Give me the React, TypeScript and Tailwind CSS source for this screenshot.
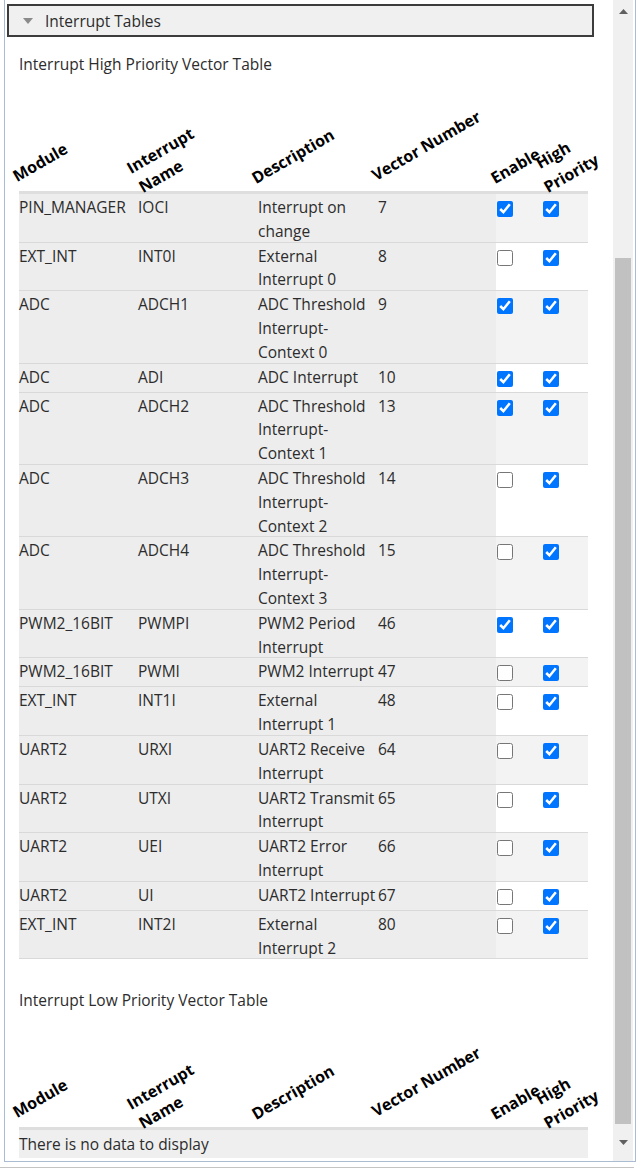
import React from "react";

type Row = {
  module: string;
  name: string;
  desc: string[];
  vector: number;
  enable: boolean;
  high: boolean;
};

const rows: Row[] = [
  { module: "PIN_MANAGER", name: "IOCI", desc: ["Interrupt on", "change"], vector: 7, enable: true, high: true },
  { module: "EXT_INT", name: "INT0I", desc: ["External", "Interrupt 0"], vector: 8, enable: false, high: true },
  { module: "ADC", name: "ADCH1", desc: ["ADC Threshold", "Interrupt-", "Context 0"], vector: 9, enable: true, high: true },
  { module: "ADC", name: "ADI", desc: ["ADC Interrupt"], vector: 10, enable: true, high: true },
  { module: "ADC", name: "ADCH2", desc: ["ADC Threshold", "Interrupt-", "Context 1"], vector: 13, enable: true, high: true },
  { module: "ADC", name: "ADCH3", desc: ["ADC Threshold", "Interrupt-", "Context 2"], vector: 14, enable: false, high: true },
  { module: "ADC", name: "ADCH4", desc: ["ADC Threshold", "Interrupt-", "Context 3"], vector: 15, enable: false, high: true },
  { module: "PWM2_16BIT", name: "PWMPI", desc: ["PWM2 Period", "Interrupt"], vector: 46, enable: true, high: true },
  { module: "PWM2_16BIT", name: "PWMI", desc: ["PWM2 Interrupt"], vector: 47, enable: false, high: true },
  { module: "EXT_INT", name: "INT1I", desc: ["External", "Interrupt 1"], vector: 48, enable: false, high: true },
  { module: "UART2", name: "URXI", desc: ["UART2 Receive", "Interrupt"], vector: 64, enable: false, high: true },
  { module: "UART2", name: "UTXI", desc: ["UART2 Transmit", "Interrupt"], vector: 65, enable: false, high: true },
  { module: "UART2", name: "UEI", desc: ["UART2 Error", "Interrupt"], vector: 66, enable: false, high: true },
  { module: "UART2", name: "UI", desc: ["UART2 Interrupt"], vector: 67, enable: false, high: true },
  { module: "EXT_INT", name: "INT2I", desc: ["External", "Interrupt 2"], vector: 80, enable: false, high: true },
];

const cols = "grid grid-cols-[119px_119px_120px_119px_46px_46px]";

const Label = ({ className, children }: { className: string; children: React.ReactNode }) => (
  <span
    className={
      "absolute origin-bottom-left -rotate-30 whitespace-nowrap text-[16px] leading-[16px] font-bold text-black " +
      className
    }
  >
    {children}
  </span>
);

const TableHeader = () => (
  <div className="relative z-10 h-[118px] border-b-[3px] border-[#dedede]">
    <Label className="left-[-1px] bottom-[7px]">Module</Label>
    <Label className="left-[113px] bottom-[15px]">Interrupt</Label>
    <Label className="left-[125px] bottom-[-4px]">Name</Label>
    <Label className="left-[238px] bottom-[5px]">Description</Label>
    <Label className="left-[358px] bottom-[8px]">Vector Number</Label>
    <Label className="left-[477px] bottom-[5px]">Enable</Label>
    <Label className="left-[522px] bottom-[20px]">High</Label>
    <Label className="left-[530px] bottom-[-4px]">Priority</Label>
  </div>
);

// text cell: Segoe-style text sits a little low in its line box
const Cell = ({ children, nowrap }: { children: React.ReactNode; nowrap?: boolean }) => (
  <div className="bg-[#ededed]">
    <div className={"translate-y-[2px]" + (nowrap ? " whitespace-nowrap" : "")}>{children}</div>
  </div>
);

const Check = ({ on }: { on: boolean }) => (
  <div className="pl-[1px] pt-[7px] min-h-[28px]">
    <input type="checkbox" defaultChecked={on} className="block m-0 w-4 h-4" />
  </div>
);

const Triangle = ({ up }: { up?: boolean }) => (
  <svg width="9" height="5" viewBox="0 0 9 5">
    <polygon points={up ? "0,5 9,5 4.5,0" : "0,0 9,0 4.5,5"} fill="#606060" />
  </svg>
);

export default function App() {
  return (
    <div className="w-[639px] h-[1170px] overflow-hidden bg-white font-['Open_Sans',sans-serif] text-[15.5px] text-[#2c2c2c]">
      <div className="ml-[4px] w-[632px] h-[1162px] flex border-l border-r border-b border-[#a9bcd2]">
        <div className="w-[608px] pl-[2px]">
          <div className="mt-[4px] w-[587px] h-[33px] flex items-center gap-[12px] pl-[14px] border-2 border-[#3c3c3c] bg-[#f0f0f0]">
            <svg width="10" height="6" viewBox="0 0 10 6">
              <polygon points="0,0 10,0 5,6" fill="#8a8a8a" />
            </svg>
            <span className="leading-6">Interrupt Tables</span>
          </div>

          <div className="pl-[12px]">
            <div className="mt-[15px] leading-6">Interrupt High Priority Vector Table</div>
            <div className="w-[569px]">
              <TableHeader />
              {rows.map((r, i) => (
                <div key={i} className={cols + " border-b border-[#d9d9d9] leading-[23.8px]"}>
                  <Cell nowrap>{r.module}</Cell>
                  <Cell>{r.name}</Cell>
                  <Cell nowrap>
                    {r.desc.map((d) => (
                      <div key={d} className="pl-[1px]">{d}</div>
                    ))}
                  </Cell>
                  <Cell>
                    <span className="pl-[1px]">{r.vector}</span>
                  </Cell>
                  <div className={i % 2 === 0 ? "bg-[#f3f3f3]" : "bg-white"}>
                    <Check on={r.enable} />
                  </div>
                  <div className={i % 2 === 0 ? "bg-[#f3f3f3]" : "bg-white"}>
                    <Check on={r.high} />
                  </div>
                </div>
              ))}
            </div>

            <div className="mt-[29px] leading-6">Interrupt Low Priority Vector Table</div>
            <div className="w-[569px]">
              <TableHeader />
              <div className="bg-[#efefef] h-[28px] leading-[28px]">There is no data to display</div>
            </div>
          </div>
        </div>

        <div className="w-[20px] bg-[#f0f0f0] flex flex-col items-center">
          <div className="h-[22px] flex items-center justify-center">
            <Triangle up />
          </div>
          <div className="mt-[236px] w-[16px] h-[866px] bg-[#c1c1c1]" />
          <div className="flex-1 flex items-center justify-center">
            <Triangle />
          </div>
        </div>
      </div>
      <div className="mt-[5px] w-[634px] h-px bg-[#c4c4c4]" />
    </div>
  );
}
